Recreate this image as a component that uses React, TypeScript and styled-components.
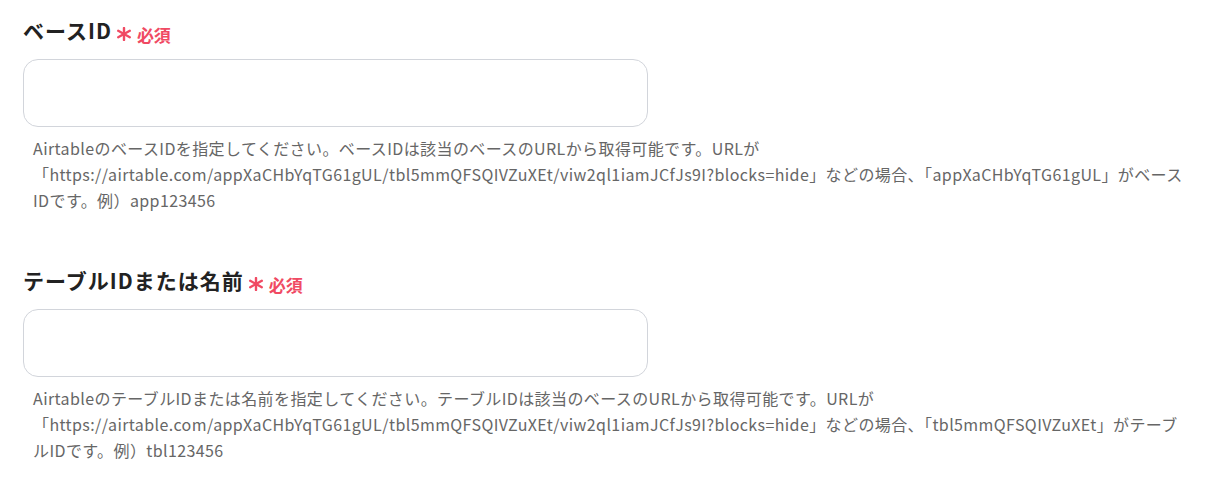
import React from "react";
import styled, { createGlobalStyle } from "styled-components";

const Global = createGlobalStyle`
  html, body { margin: 0; padding: 0; background: #fff; }
  body { font-family: "Noto Sans CJK JP", "Noto Sans", sans-serif; }
`;

const Page = styled.div`
  padding: 15px 20px 0 23px;
  display: flex;
  flex-direction: column;
  gap: 52px;
`;

const Field = styled.section`
  display: flex;
  flex-direction: column;
`;

const LabelRow = styled.div`
  display: flex;
  align-items: center;
  height: 30px;
`;

const LabelText = styled.span`
  font-size: 21px;
  font-weight: 700;
  color: #222;
  letter-spacing: 1px;
`;

const Required = styled.span`
  display: inline-flex;
  align-items: center;
  gap: 5px;
  margin-left: 4px;
  margin-top: 8px;
  color: #f04a63;
  font-size: 17px;
  font-weight: 700;
`;

const Input = styled.input`
  box-sizing: border-box;
  margin-top: 14px;
  width: 625px;
  height: 68px;
  border: 1px solid #d2d5db;
  border-radius: 15px;
  background: #fff;
  outline: none;
  padding: 0 16px;
  font-size: 15px;
`;

const Help = styled.p`
  margin: 8px 0 0;
  padding: 0 14px 0 10px;
  font-family: "Noto Sans CJK JP", sans-serif;
  font-size: 16px;
  line-height: 26px;
  letter-spacing: 0.4px;
  color: #666;
`;

const Asterisk = () => (
  <svg width="16" height="14" viewBox="0 0 16 14" aria-hidden>
    <g stroke="#f04a63" strokeWidth="2.4" strokeLinecap="round">
      <line x1="8" y1="1" x2="8" y2="13" />
      <line x1="2.2" y1="3.8" x2="13.8" y2="10.2" />
      <line x1="2.2" y1="10.2" x2="13.8" y2="3.8" />
    </g>
  </svg>
);

const fields = [
  {
    label: "ベースID",
    help:
      "AirtableのベースIDを指定してください。ベースIDは該当のベースのURLから取得可能です。URLが「https://airtable.com/appXaCHbYqTG61gUL/tbl5mmQFSQIVZuXEt/viw2ql1iamJCfJs9I?blocks=hide」などの場合、「appXaCHbYqTG61gUL」がベースIDです。例）app123456",
  },
  {
    label: "テーブルIDまたは名前",
    help:
      "AirtableのテーブルIDまたは名前を指定してください。テーブルIDは該当のベースのURLから取得可能です。URLが「https://airtable.com/appXaCHbYqTG61gUL/tbl5mmQFSQIVZuXEt/viw2ql1iamJCfJs9I?blocks=hide」などの場合、「tbl5mmQFSQIVZuXEt」がテーブルIDです。例）tbl123456",
  },
];

export default function App() {
  return (
    <>
      <Global />
      <Page>
        {fields.map((f) => (
          <Field key={f.label}>
            <LabelRow>
              <LabelText>{f.label}</LabelText>
              <Required>
                <Asterisk />
                必須
              </Required>
            </LabelRow>
            <Input type="text" />
            <Help>{f.help}</Help>
          </Field>
        ))}
      </Page>
    </>
  );
}
